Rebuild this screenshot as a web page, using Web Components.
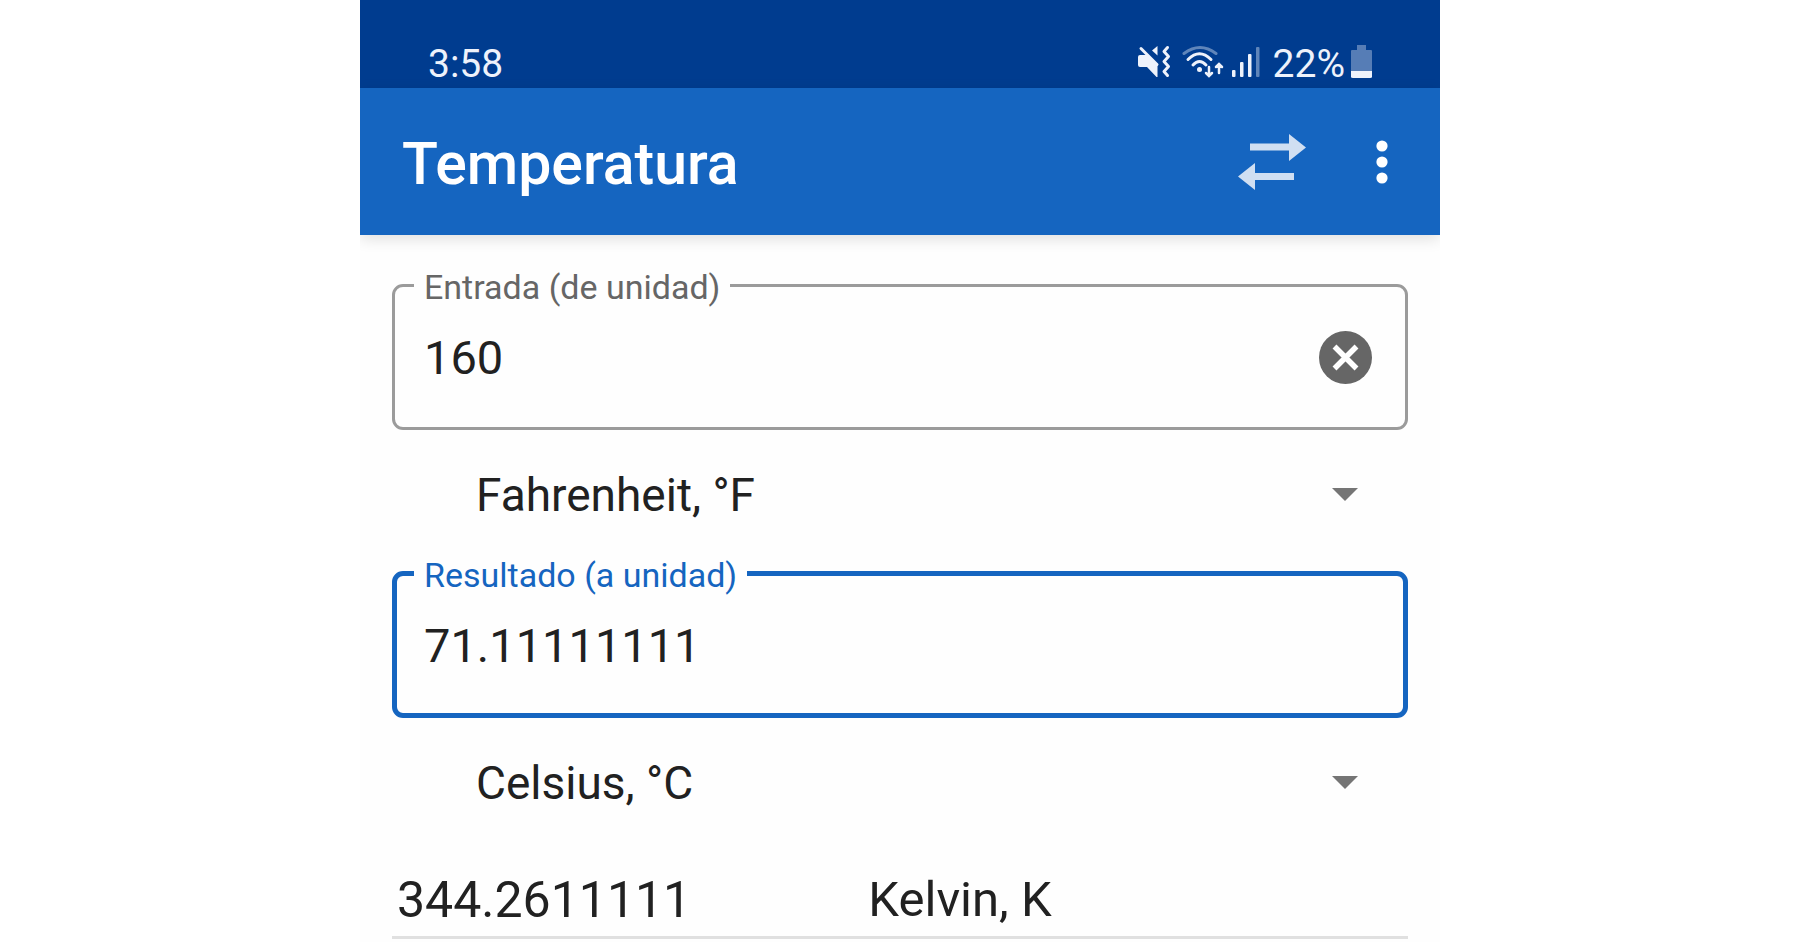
<!DOCTYPE html>
<html lang="es">
<head>
<meta charset="utf-8">
<title>Temperatura</title>
<style>
  body {
    margin: 0;
    background: #fff;
    color: #212121;
    font-family: Roboto, "Liberation Sans", sans-serif;
  }
</style>
</head>
<body>
<unit-converter></unit-converter>

<template id="status-bar">
  <style>
    :host {
      display: flex;
      align-items: center;
      height: 48px;
      padding: 40px 68px 0;
      background: #003c8f;
      color: #eef2fb;
      font-size: 39px;
      line-height: 48px;
    }
    .time { flex: 1; }
    .icons { display: flex; align-items: center; }
    svg { display: block; margin-bottom: 4px; }
    .wifi { margin-left: 11px; }
    .signal { margin-left: 8px; margin-right: 13px; }
    .battery { margin-left: 6px; }
  </style>
  <span class="time"><slot name="time"></slot></span>
  <div class="icons">
    <svg width="33" height="34" viewBox="0 0 33 34" fill="currentColor">
      <path d="M2 10h7.500L19.500 20v12h-1L9 22H2q-2 0-2-2v-8q0-2 2-2z"/>
      <path d="M3 3.500l16 16" stroke="currentColor" stroke-width="3" stroke-linecap="round"/>
      <path d="M19.500 1v9.500L14 5.500z"/>
      <path d="M29.500 2.500L26 6.500l4.500 5-4.500 5 4.500 5-4.500 5 3.500 4" fill="none" stroke="currentColor" stroke-width="3" stroke-linecap="round" stroke-linejoin="round"/>
    </svg>
    <svg class="wifi" width="42" height="34" viewBox="0 0 42 34" fill="none" stroke="currentColor" stroke-width="3" stroke-linecap="round">
      <path d="M2 8.500Q18-3.500 34 8.500" opacity=".4"/>
      <path d="M6 14.500Q17.500 3 29 14.500M11 20q6.500-7 13 0"/>
      <circle cx="17.500" cy="24.500" r="2.500" fill="currentColor" stroke="none"/>
      <path d="M27 22v8M24 28l3 3 3-3M37 28v-8M34 22l3-3 3 3" stroke-width="2.500"/>
    </svg>
    <svg class="signal" width="28" height="34" viewBox="0 0 28 34" fill="currentColor">
      <rect x="0" y="25" width="3.500" height="7" rx="1"/>
      <rect x="8" y="17" width="3.500" height="15" rx="1"/>
      <rect x="16" y="9" width="3.500" height="23" rx="1"/>
      <rect x="24" y="2" width="3.500" height="30" rx="1" opacity=".4"/>
    </svg>
    <slot name="charge"></slot>
    <svg class="battery" width="21" height="34" viewBox="0 0 21 34" fill="currentColor">
      <path d="M6 0h9v5h5q1 0 1 1v20H0V6q0-1 1-1h5z" opacity=".36"/>
      <path d="M0 26h21v6q0 1-2 1H2q-2 0-2-1z"/>
    </svg>
  </div>
</template>

<template id="app-bar">
  <style>
    :host {
      display: flex;
      align-items: center;
      height: 147px;
      padding: 0 14px 0 42px;
      background: #1565c0;
      color: #fff;
      box-shadow: 0 4px 14px rgba(0, 0, 0, .12);
    }
    h1 {
      flex: 1;
      margin: 0;
      padding-top: 4px;
      font-size: 59px;
      font-weight: 500;
      line-height: 68px;
    }
    button {
      display: grid;
      place-items: center;
      width: 88px;
      height: 88px;
      padding: 0;
      border: 0;
      background: none;
      color: inherit;
    }
    .swap { width: 132px; color: #d0dff2; }
  </style>
  <h1><slot></slot></h1>
  <button class="swap" aria-label="Intercambiar">
    <svg width="68" height="56" viewBox="0 0 68 56" fill="currentColor">
      <path d="M12 9.500h39V0l17 13.500-17 13.500V16.500H12zM56 39H17V29L0 42.500 17 56V46h39z"/>
    </svg>
  </button>
  <button aria-label="Más opciones">
    <svg width="12" height="44" viewBox="0 0 12 44" fill="currentColor">
      <circle cx="6" cy="6" r="5.600"/>
      <circle cx="6" cy="22" r="5.600"/>
      <circle cx="6" cy="38" r="5.600"/>
    </svg>
  </button>
</template>

<template id="text-field">
  <style>
    :host {
      display: block;
      --line: 3px;
      --outline: #9b9b9b;
      --label: #666;
    }
    :host([active]) {
      --line: 5px;
      --outline: #1565c0;
      --label: #1565c0;
    }
    fieldset {
      box-sizing: border-box;
      height: 167px;
      min-width: 0;
      margin: 0;
      padding: 0 calc(36px - var(--line)) 0 calc(32px - var(--line));
      border: var(--line) solid var(--outline);
      border-radius: 11px;
    }
    legend {
      margin-left: -10px;
      padding: 4px 10px 0;
      color: var(--label);
      font-size: 34px;
      line-height: 41px;
    }
    .row {
      display: flex;
      align-items: center;
      height: 99px;
    }
    input {
      flex: 1;
      min-width: 0;
      height: 56px;
      padding: 0;
      border: 0;
      outline: 0;
      background: none;
      color: inherit;
      font: 47px/56px Roboto, "Liberation Sans", sans-serif;
    }
    button {
      padding: 0;
      border: 0;
      background: none;
      color: #666;
    }
    svg { display: block; }
    :host(:not([clearable])) button { display: none; }
  </style>
  <fieldset>
    <legend><label for="value"><slot></slot></label></legend>
    <div class="row">
      <input id="value" type="text" inputmode="decimal">
      <button aria-label="Borrar">
        <svg width="53" height="53" viewBox="0 0 53 53">
          <circle cx="26.500" cy="26.500" r="26.500" fill="currentColor"/>
          <path d="M15.500 15.500l22 22M37.500 15.500l-22 22" stroke="#fff" stroke-width="5.500"/>
        </svg>
      </button>
    </div>
  </fieldset>
</template>

<template id="unit-select">
  <style>
    :host {
      display: grid;
      align-items: center;
      height: 113px;
      padding: 8px 50px 0 84px;
    }
    select, svg { grid-area: 1 / 1; }
    select {
      appearance: none;
      width: 100%;
      padding: 0;
      border: 0;
      outline: 0;
      background: none;
      color: inherit;
      font: 46px/56px Roboto, "Liberation Sans", sans-serif;
    }
    svg {
      justify-self: end;
      color: #757575;
      pointer-events: none;
    }
  </style>
  <select><option></option></select>
  <svg width="26" height="14" viewBox="0 0 26 14"><path d="M0 0h26L13 13z" fill="currentColor"/></svg>
</template>

<template id="conversion-list">
  <style>
    :host { display: block; }
    table {
      width: 100%;
      table-layout: fixed;
      border-collapse: separate;
      border-spacing: 0;
    }
    td {
      height: 73px;
      padding: 24px 0 0 9px;
      border-bottom: 3px solid #e0e0e0;
      font-size: 49px;
      line-height: 60px;
    }
    td:first-child {
      width: 46%;
      padding-left: 5px;
      box-sizing: border-box;
      font-size: 50px;
    }
  </style>
  <table>
    <tbody>
      <tr>
        <td><slot name="value"></slot></td>
        <td><slot name="unit"></slot></td>
      </tr>
    </tbody>
  </table>
</template>

<template id="unit-converter">
  <style>
    :host {
      display: block;
      width: 60%;
      min-height: 100vh;
      margin: 0 auto;
      overflow: clip;
      background: #fefefe;
    }
    main { padding: 28px 32px 0; }
  </style>
  <status-bar>
    <span slot="time">3:58</span>
    <span slot="charge">22%</span>
  </status-bar>
  <app-bar>Temperatura</app-bar>
  <main>
    <text-field value="160" clearable>Entrada (de unidad)</text-field>
    <unit-select value="Fahrenheit, °F" label="De unidad"></unit-select>
    <text-field value="71.11111111" active>Resultado (a unidad)</text-field>
    <unit-select value="Celsius, °C" label="A unidad"></unit-select>
    <conversion-list>
      <span slot="value">344.2611111</span>
      <span slot="unit">Kelvin, K</span>
    </conversion-list>
  </main>
</template>

<script>
class TemplateElement extends HTMLElement {
  constructor() {
    super();
    const template = document.getElementById(this.localName);
    this.attachShadow({ mode: 'open' });
    this.shadowRoot.appendChild(template.content.cloneNode(true));
  }
}

class StatusBar extends TemplateElement {}
class AppBar extends TemplateElement {}
class ConversionList extends TemplateElement {}
class UnitConverter extends TemplateElement {}

class TextField extends TemplateElement {
  connectedCallback() {
    this.$input = this.shadowRoot.querySelector('input');
    this.$input.value = this.getAttribute('value');
    this.shadowRoot.querySelector('button').addEventListener('click', () => {
      this.$input.value = '';
      this.$input.focus();
    });
  }
}

class UnitSelect extends TemplateElement {
  connectedCallback() {
    this.$select = this.shadowRoot.querySelector('select');
    this.$select.setAttribute('aria-label', this.getAttribute('label'));
    this.$select.options[0].textContent = this.getAttribute('value');
  }
}

customElements.define('status-bar', StatusBar);
customElements.define('app-bar', AppBar);
customElements.define('text-field', TextField);
customElements.define('unit-select', UnitSelect);
customElements.define('conversion-list', ConversionList);
customElements.define('unit-converter', UnitConverter);
</script>
</body>
</html>
